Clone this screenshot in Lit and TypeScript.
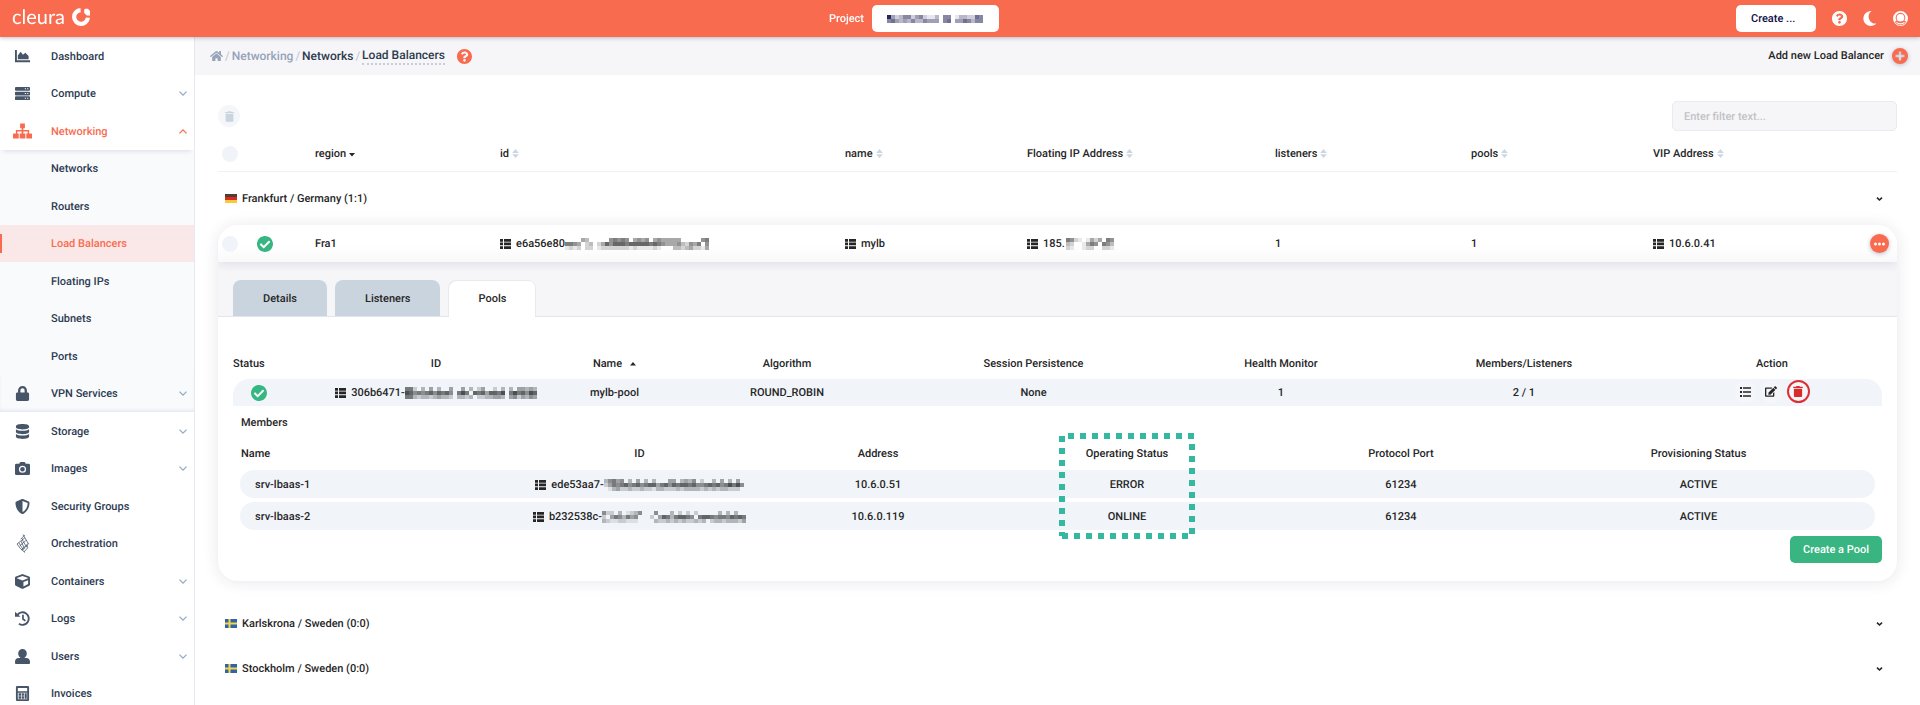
import { LitElement, html, css, svg, nothing } from "lit";
import { customElement } from "lit/decorators.js";

type Icon = { box: string; body: unknown };

const p = (box: string, d: string): Icon => ({ box, body: svg`<path fill="currentColor" fill-rule="evenodd" d=${d}/>` });

const ICONS: Record<string, Icon> = {
  chart: p("0 0 16 16", "M0 1h2v11h14v2H0zM3 11V7l3-4 2.500 3L11 4l3.500 3.500V11z"),
  server: p("0 0 16 16", "M1 1h14a1 1 0 0 1 1 1v2a1 1 0 0 1-1 1H1a1 1 0 0 1-1-1V2a1 1 0 0 1 1-1zM1 6h14a1 1 0 0 1 1 1v2a1 1 0 0 1-1 1H1a1 1 0 0 1-1-1V7a1 1 0 0 1 1-1zM1 11h14a1 1 0 0 1 1 1v2a1 1 0 0 1-1 1H1a1 1 0 0 1-1-1v-2a1 1 0 0 1 1-1zM10.500 2.500v1h1.200v-1zM13 2.500v1h1.200v-1zM10.500 7.500v1h1.200v-1zM13 7.500v1h1.200v-1zM10.500 12.500v1h1.200v-1zM13 12.500v1h1.200v-1z"),
  sitemap: p("0 0 20 16", "M7.500 0h5v5h-1.600v2H17v3.500h2.200a.8.8 0 0 1 .8.8V16h-6v-5.500h1.500v-2h-4.600v2H13V16H7v-5.500h2.100v-2H4.500v2H6V16H0v-4.700a.8.8 0 0 1 .8-.8H3V7h6.100V5H7.500z"),
  lock: p("0 0 448 512", "M400 224h-24v-72C376 68.200 307.800 0 224 0S72 68.200 72 152v72H48c-26.500 0-48 21.500-48 48v192c0 26.500 21.500 48 48 48h352c26.500 0 48-21.500 48-48V272c0-26.500-21.500-48-48-48zm-104 0H152v-72c0-39.700 32.300-72 72-72s72 32.300 72 72v72z"),
  database: p("0 0 14 16", "M0 2.300C0 1 3 0 7 0s7 1 7 2.300v1.200C14 4.800 11 5.800 7 5.800S0 4.800 0 3.500zM0 5.600c1.500 1.100 4 1.600 7 1.600s5.500-.5 7-1.600v3C14 9.900 11 10.900 7 10.900S0 9.900 0 8.600zM0 10.700c1.500 1.100 4 1.600 7 1.600s5.500-.5 7-1.600v3C14 15 11 16 7 16s-7-1-7-2.300z"),
  camera: p("0 0 16 16", "M1.500 3H4.500L5.200 1.500A1 1 0 0 1 6 1h4a1 1 0 0 1 .8.5L11.500 3h3A1.500 1.500 0 0 1 16 4.500v9a1.500 1.500 0 0 1-1.500 1.500h-13A1.500 1.500 0 0 1 0 13.500v-9A1.500 1.500 0 0 1 1.500 3zM8 5a3.800 3.800 0 1 0 0 7.600A3.800 3.800 0 0 0 8 5zM8 6.300a2.500 2.500 0 1 1 0 5A2.500 2.500 0 0 1 8 6.300z"),
  shield: p("0 0 512 512", "M466.500 83.700l-192-80a48.150 48.150 0 0 0-36.900 0l-192 80C27.700 91.100 16 108.600 16 128c0 198.500 114.500 335.700 221.500 380.300 11.800 4.900 25.100 4.900 36.900 0C360.100 472.600 496 349.300 496 128c0-19.400-11.700-36.900-29.500-44.300zM256.100 446.300l-.1-381 175.900 73.300c-3.300 151.400-82.100 261.100-175.800 307.700z"),
  cube: p("0 0 512 512", "M239.100 6.300l-208 78c-18.700 7-31.100 25-31.100 45v225.100c0 18.200 10.300 34.800 26.500 42.900l208 104c13.500 6.800 29.400 6.800 42.900 0l208-104c16.300-8.100 26.500-24.800 26.500-42.900V129.300c0-20-12.400-37.900-31.100-44.900l-208-78C262 2.200 250 2.200 239.100 6.300zM256 68.400l192 72v1.100l-192 78-192-78v-1.100l192-72zm32 356V275.500l160-65v133.900l-160 80z"),
  user: p("0 0 16 16", "M8 0a4.600 4.600 0 0 1 4.600 4.600C12.600 6.600 11.600 8.500 10 9.500h2c2.500 0 4 1.800 4 4V15a1 1 0 0 1-1 1H1a1 1 0 0 1-1-1v-1.500c0-2.200 1.500-4 4-4h2C4.400 8.500 3.400 6.600 3.400 4.600A4.600 4.600 0 0 1 8 0z"),
  calc: p("0 0 14 16", "M1.200 0h11.600A1.200 1.200 0 0 1 14 1.200v13.600a1.200 1.200 0 0 1-1.200 1.200H1.200A1.200 1.200 0 0 1 0 14.800V1.200A1.200 1.200 0 0 1 1.200 0zM2 2v3.500h10V2zM2 7.200V14h10V7.200zM2.800 7.800h2.700v2.500H2.800zM6.200 7.800h2.300v2.500H6.200zM2.800 11h2.700v2.500H2.800zM6.200 11h2.300v2.500H6.200zM9.300 7.800h2.200v5.700H9.300z"),
  history: { box: "0 0 16 16", body: svg`<path fill="none" stroke="currentColor" stroke-width="2" d="M2.500 4.200A6.700 6.700 0 1 1 4.200 13.600"/><path fill="currentColor" d="M0 .8l5.800 5.300H0z"/><path fill="none" stroke="currentColor" stroke-width="1.800" d="M8.500 4v4.500l2.600 2"/>` },
  heat: { box: "0 0 14 20", body: svg`<g fill="none" stroke="currentColor" stroke-width=".8"><path d="M7 .5l2 3.500L2 9.500l-1.300 1 3 4.200L9 19.500M9 4l3.800 6.500L6 17M6 4.500l1 3 4 6.500M2.500 9L7.500 17M5 7.500l3.500 8M9 1L4.500 5.500M10.500 6.500l-7 6M12.500 10l-7.500 7M8 19l4-4.500-1-3"/></g>` },
  home: p("0 0 576 512", "M280.370 148.260L96 300.110V464a16 16 0 0 0 16 16l112.060-.29a16 16 0 0 0 15.920-16V368a16 16 0 0 1 16-16h64a16 16 0 0 1 16 16v95.640a16 16 0 0 0 16 16.050L464 480a16 16 0 0 0 16-16V300L295.670 148.260a12.190 12.190 0 0 0-15.300 0zM571.600 251.470L488 182.560V44.050a12 12 0 0 0-12-12h-56a12 12 0 0 0-12 12v72.610L318.470 43a48 48 0 0 0-61 0L4.340 251.470a12 12 0 0 0-1.600 16.900l25.500 31A12 12 0 0 0 45.150 301l235.220-193.740a12.190 12.190 0 0 1 15.300 0L530.900 301a12 12 0 0 0 16.900-1.600l25.500-31a12 12 0 0 0-1.700-16.930z"),
  question: p("8 8 496 496", "M504 256c0 136.997-111.043 248-248 248S8 392.997 8 256C8 119.083 119.043 8 256 8s248 111.083 248 248zM262.655 90c-54.497 0-89.255 22.957-116.549 63.758-3.536 5.286-2.353 12.415 2.715 16.258l34.699 26.310c5.205 3.947 12.621 3.008 16.665-2.122 17.864-22.658 30.113-35.797 57.303-35.797 20.429 0 45.698 13.148 45.698 32.958 0 14.976-12.363 22.667-32.534 33.976C247.128 238.528 216 254.941 216 296v4c0 6.627 5.373 12 12 12h56c6.627 0 12-5.373 12-12v-1.333c0-28.462 83.186-29.647 83.186-106.667 0-58.002-60.165-102-116.531-102zM256 338c-25.365 0-46 20.635-46 46 0 25.364 20.635 46 46 46s46-20.636 46-46c0-25.365-20.635-46-46-46z"),
  check: p("8 8 496 496", "M504 256c0 136.967-111.033 248-248 248S8 392.967 8 256 119.033 8 256 8s248 111.033 248 248zM227.314 387.314l184-184c6.248-6.248 6.248-16.379 0-22.627l-22.627-22.627c-6.248-6.249-16.379-6.249-22.628 0L216 308.118l-70.059-70.059c-6.248-6.248-16.379-6.248-22.628 0l-22.627 22.627c-6.248 6.248-6.248 16.379 0 22.627l104 104c6.249 6.249 16.379 6.249 22.628.001z"),
  trash: p("0 0 448 512", "M32 464a48 48 0 0 0 48 48h288a48 48 0 0 0 48-48V128H32zM432 32H312l-9.400-18.700A24 24 0 0 0 281.100 0H166.800a23.720 23.720 0 0 0-21.400 13.300L136 32H16A16 16 0 0 0 0 48v32a16 16 0 0 0 16 16h416a16 16 0 0 0 16-16V48a16 16 0 0 0-16-16z"),
  edit: p("0 0 576 512", "M402.600 83.200l90.200 90.200c3.800 3.800 3.800 10 0 13.800L274.400 405.600l-92.800 10.300c-12.400 1.400-22.900-9.100-21.500-21.500l10.300-92.800L388.800 83.200c3.800-3.800 10-3.800 13.800 0zm162-22.900l-48.800-48.800c-15.200-15.200-39.900-15.200-55.200 0l-35.400 35.400c-3.800 3.800-3.800 10 0 13.800l90.200 90.200c3.800 3.800 10 3.800 13.800 0l35.400-35.400c15.200-15.300 15.200-40 0-55.200zM384 346.200V448H64V128h229.800c3.200 0 6.200-1.300 8.500-3.500l40-40c7.600-7.600 2.200-20.500-8.500-20.500H48C21.500 64 0 85.500 0 112v352c0 26.500 21.500 48 48 48h352c26.500 0 48-21.500 48-48V306.200c0-10.700-12.900-16-20.500-8.500l-40 40c-2.200 2.300-3.500 5.300-3.500 8.500z"),
  thlist: p("0 0 11 10", "M0 0h3v2.700H0zM4 0h7v2.700H4zM0 3.600h3v2.700H0zM4 3.600h7v2.700H4zM0 7.200h3v2.700H0zM4 7.200h7v2.700H4z"),
  list: p("0 0 11 10", "M0 0h2v2H0zM3 .3h8v1.400H3zM0 4h2v2H0zM3 4.300h8v1.400H3zM0 8h2v2H0zM3 8.300h8v1.400H3z"),
  moon: p("0 0 14 16", "M8.500 0A8 8 0 1 0 13.800 13.400 7.500 7.500 0 0 1 8.500 0z"),
  account: p("0 0 16 16", "M8 0a8 8 0 1 1 0 16A8 8 0 0 1 8 0zM8 2a5.200 5.200 0 0 0-4.200 8.300C3 10.400 2.400 11 2 11.700a7 7 0 0 0 12 0c-.4-.7-1-1.300-1.800-1.400A5.200 5.200 0 0 0 8 2zM8 3.100a4.100 4.100 0 1 1 0 8.200 4.100 4.100 0 0 1 0-8.200zM4.200 11.600a5.600 5.600 0 0 0 7.600 0l1 .4a6 6 0 0 1-9.600 0z"),
  plus: p("0 0 16 16", "M8 0a8 8 0 1 1 0 16A8 8 0 0 1 8 0zM6.800 3.500v3.300H3.500v2.400h3.300v3.300h2.400V9.200h3.300V6.800H9.200V3.500z"),
  dots: p("0 0 11 4", "M1.500.5a1.500 1.500 0 1 1 0 3 1.500 1.500 0 0 1 0-3zM5.500.5a1.500 1.500 0 1 1 0 3 1.500 1.500 0 0 1 0-3zM9.500.5a1.500 1.500 0 1 1 0 3 1.500 1.500 0 0 1 0-3z"),
  down: { box: "0 0 8 5", body: svg`<path fill="none" stroke="currentColor" stroke-width="1.300" d="M.5.600L4 4.100 7.500.600"/>` },
  up: { box: "0 0 8 5", body: svg`<path fill="none" stroke="currentColor" stroke-width="1.300" d="M.5 4.400L4 .9l3.500 3.500"/>` },
  fold: { box: "0 0 6 4", body: svg`<path fill="none" stroke="currentColor" stroke-width="1.600" d="M.5.600L3 3 5.500.600"/>` },
  sort: p("0 0 6 8", "M0 3.500L3 0l3 3.500zM0 4.600h6L3 8.100z"),
  sortdown: p("0 0 6 4", "M0 0h6L3 3.500z"),
  sortup: p("0 0 6 4", "M0 3.500h6L3 0z"),
  mark: { box: "0 0 18 18", body: svg`<path fill="none" stroke="currentColor" stroke-width="4.200" d="M8.600 2.100A6.900 6.900 0 1 0 15.900 9.600"/><path fill="currentColor" d="M12.200 2l.8-1.200h3L18 3v4.400h-3.200L12.200 5z"/>` },
};

const icon = (name: string) =>
  svg`<svg class="icon ${name}" viewBox=${ICONS[name].box} aria-hidden="true">${ICONS[name].body}</svg>`;

/* Rows of 4px cells; each digit is an ink strength from 0 (clear) to 9. */
const CENSORED: Record<string, string[]> = {
  project: ["942355245211305501332265", "564343533544405604465355"],
  lb: ["000043000005656504545045444440000056", "665402302475777677777676544453254605", "121202201222222212111121000332342214"],
  fip: ["652101424065", "320014650653", "210012200221"],
  pool: ["662030403004004030240020303044343", "875656757675068607674776806867587", "663233234332033230223344304524354"],
  m1: ["35645030403030004403435020030403040", "24656756756774675767767556767568685", "01342232232213322232333323232332220"],
  m2: ["522030123500050003020202000003030300", "204653645000204763677650677656657676", "321122111000032232323223230233233324"],
};

const mosaic = (key: string) => {
  const rows = CENSORED[key];
  const w = rows[0].length * 4;
  const h = rows.length * 4;
  return svg`<svg class="mosaic" width=${w} height=${h} viewBox="0 0 ${w} ${h}" shape-rendering="crispEdges" aria-hidden="true">${rows.map((r, y) =>
    [...r].map((c, x) => (c === "0" ? nothing : svg`<rect x=${x * 4} y=${y * 4} width="4" height="4" fill="currentColor" fill-opacity=${Number(c) / 10}/>`))
  )}</svg>`;
};

const flag = (country: string) =>
  country === "de"
    ? svg`<svg class="flag" viewBox="0 0 12 9" aria-hidden="true"><rect width="12" height="3" fill="#4a4038"/><rect y="3" width="12" height="3" fill="#e0281c"/><rect y="6" width="12" height="3" fill="#f8c93c"/></svg>`
    : svg`<svg class="flag" viewBox="0 0 12 9" aria-hidden="true"><rect width="12" height="9" fill="#2f64a8"/><path fill="#f5d54a" d="M3.500 0h2v9h-2zM0 3.500h12v2H0z"/></svg>`;

const shared = css`
  *, *::before, *::after { box-sizing: border-box; }
  a { color: inherit; text-decoration: none; }
  button { font: inherit; color: inherit; border: 0; padding: 0; background: none; cursor: pointer; text-rendering: inherit; }
  .icon { display: block; flex: none; overflow: visible; }
  .mosaic { display: block; flex: none; }
`;

const NAV: { label: string; icon?: string; fold?: string; cls?: string }[] = [
  { label: "Dashboard", icon: "chart" },
  { label: "Compute", icon: "server", fold: "down" },
  { label: "Networking", icon: "sitemap", fold: "up", cls: "open" },
  { label: "Networks", cls: "sub" },
  { label: "Routers", cls: "sub" },
  { label: "Load Balancers", cls: "sub current" },
  { label: "Floating IPs", cls: "sub" },
  { label: "Subnets", cls: "sub" },
  { label: "Ports", cls: "sub" },
  { label: "VPN Services", icon: "lock", fold: "down", cls: "sub last" },
  { label: "Storage", icon: "database", fold: "down" },
  { label: "Images", icon: "camera", fold: "down" },
  { label: "Security Groups", icon: "shield" },
  { label: "Orchestration", icon: "heat" },
  { label: "Containers", icon: "cube", fold: "down" },
  { label: "Logs", icon: "history", fold: "down" },
  { label: "Users", icon: "user", fold: "down" },
  { label: "Invoices", icon: "calc" },
];

@customElement("side-nav")
export class SideNav extends LitElement {
  static styles = [shared, css`
    :host { display: block; overflow-y: auto; scrollbar-width: none; background: #fff; border-right: 1px solid #e4e8f0; color: #2d3b52; }
    ul { list-style: none; margin: 0; padding: 0; }
    li { height: 38px; }
    li:nth-child(even) { height: 37px; }
    a { display: grid; grid-template-columns: 51px 1fr 22px; align-items: center; height: 100%; }
    .label { padding-top: 1px; }
    .slot { display: flex; justify-content: center; width: 45px; color: #475569; }
    .slot .icon { width: 15px; height: 15px; }
    .slot .sitemap { width: 19px; height: 16px; }
    .slot .heat { width: 14px; height: 19px; }
    .down, .up { width: 8px; height: 5px; margin-left: 7px; color: #94a9c4; }
    .open, .open .slot, .open .up, .current { color: #f96b4f; }
    .open { position: relative; box-shadow: 0 4px 5px -3px rgba(40, 50, 80, 0.14); }
    .sub { background: #f8fafc; }
    .current { background: #f9e8e7; }
    .current a { background: linear-gradient(#f96b4f, #f96b4f) left center / 2px 19px no-repeat; }
    .last { box-shadow: inset 0 -3px 4px -2px rgba(40, 50, 80, 0.12); }
  `];

  render() {
    return html`<nav aria-label="Main"><ul>${NAV.map((n) => html`
      <li class=${n.cls ?? ""}><a href="#">
        <span class="slot">${n.icon ? icon(n.icon) : nothing}</span>
        <span class="label">${n.label}</span>
        ${n.fold ? icon(n.fold) : nothing}
      </a></li>`)}</ul></nav>`;
  }
}

@customElement("pool-panel")
export class PoolPanel extends LitElement {
  static styles = [shared, css`
    :host { display: block; padding: 33px 15px 18px; text-align: center; }
    table, thead, tbody { display: block; }
    tr { display: grid; align-items: center; }
    th, td { padding: 0; font-weight: inherit; min-width: 0; }
    .pools tr { grid-template-columns: 93fr 220fr 137fr 208fr 285fr 210fr 276fr 220fr; }
    .pools th { height: 29px; line-height: 27px; }
    .pools td { line-height: 27px; }
    .pools tbody tr { height: 27px; background: #f1f5fa; border-radius: 16px 16px 0 0; }
    .pools th:first-child { text-align: left; }
    .status { padding-left: 18px; }
    .check { width: 16px; height: 16px; color: #36b680; }
    .cell { display: inline-flex; align-items: center; gap: 5px; vertical-align: top; }
    .ref { display: flex; align-items: center; justify-content: center; }
    .thlist { width: 11px; height: 10px; margin-right: 5px; }
    .sortup { width: 6px; height: 4px; margin-left: 3px; }
    .actions { display: flex; justify-content: center; align-items: center; gap: 5px; padding-bottom: 2px; }
    .actions button { display: grid; place-items: center; width: 21px; height: 22px; border-radius: 50%; background: #f5f6f9; }
    .actions .danger { width: 23px; height: 23px; border: 2px solid #dc2f35; color: #d92b2b; }
    .list { width: 11px; height: 10px; }
    .edit { width: 12px; height: 11px; }
    .trash { width: 10px; height: 11px; }
    .members { padding: 0 7px; }
    h3 { margin: 0; padding-left: 1px; font: inherit; line-height: 34px; text-align: left; }
    .members tr { grid-template-columns: 257fr 285fr 192fr 306fr 242fr 353fr; }
    .members th { height: 30px; line-height: 27px; }
    .members th:first-child { text-align: left; padding-left: 1px; }
    .members tbody { display: grid; gap: 4px; }
    .members tbody tr { height: 28px; padding-top: 1px; background: #f1f5fa; border-radius: 14px; }
    .members td:first-child { text-align: left; padding-left: 15px; }
    .grid { position: relative; }
    .marker { position: absolute; top: -7px; left: 50%; width: 136px; height: 106px; margin-left: 1px; pointer-events: none; }
    .foot { display: flex; justify-content: flex-end; padding-top: 6px; }
    .create { height: 27px; padding: 0 13px; border-radius: 5px; background: #38b581; color: #fff; }
  `];

  render() {
    const members = [
      ["srv-lbaas-1", "ede53aa7-", "m1", "10.6.0.51", "ERROR"],
      ["srv-lbaas-2", "b232538c-", "m2", "10.6.0.119", "ONLINE"],
    ];
    return html`
      <table class="pools">
        <thead><tr>
          <th>Status</th><th>ID</th>
          <th><span class="cell">Name ${icon("sortup")}</span></th>
          <th>Algorithm</th><th>Session Persistence</th><th>Health Monitor</th><th>Members/Listeners</th><th>Action</th>
        </tr></thead>
        <tbody><tr>
          <td class="status">${icon("check")}</td>
          <td class="ref">${icon("thlist")}306b6471-${mosaic("pool")}</td>
          <td>mylb-pool</td><td>ROUND_ROBIN</td><td>None</td><td>1</td><td>2 / 1</td>
          <td class="actions">
            <button aria-label="List members">${icon("list")}</button>
            <button aria-label="Edit pool">${icon("edit")}</button>
            <button class="danger" aria-label="Delete pool">${icon("trash")}</button>
          </td>
        </tr></tbody>
      </table>
      <section class="members">
        <h3>Members</h3>
        <div class="grid">
          <table>
            <thead><tr>
              <th>Name</th><th>ID</th><th>Address</th><th>Operating Status</th><th>Protocol Port</th><th>Provisioning Status</th>
            </tr></thead>
            <tbody>${members.map(([name, id, m, ip, op]) => html`
              <tr><td>${name}</td><td class="ref">${icon("thlist")}${id}${mosaic(m)}</td><td>${ip}</td><td>${op}</td><td>61234</td><td>ACTIVE</td></tr>`)}
            </tbody>
          </table>
          <svg class="marker" viewBox="0 0 136 106" aria-hidden="true">
            <g fill="none" stroke="#34b8a0" stroke-width="6" stroke-dasharray="6 6">
              <path d="M9 3H136"/><path d="M133 11V101"/><path d="M3 3V103"/><path d="M3 103H129"/>
            </g>
          </svg>
        </div>
      </section>
      <div class="foot"><button class="create">Create a Pool</button></div>`;
  }
}

@customElement("balancer-table")
export class BalancerTable extends LitElement {
  static styles = [shared, css`
    :host { display: block; }
    table, thead, tbody, tr { display: block; }
    th, td { display: flex; align-items: center; padding: 0; font-weight: inherit; text-align: left; min-width: 0; }
    .cols { display: grid; align-items: center; grid-template-columns: 39px 58px 185fr 345fr 182fr 248fr 196fr 182fr 209fr 35px; }
    thead tr { height: 36px; border-bottom: 1px solid #f0f1f4; }
    th button { display: flex; align-items: center; gap: 3px; }
    .sort { width: 7px; height: 9px; color: #ccd6e2; }
    .sortdown { width: 6px; height: 4px; margin-top: 3px; }
    input { appearance: none; width: 16px; height: 16px; margin: 0 0 0 4px; border-radius: 50%; background: #f0f4f9; }
    .group td { height: 45px; padding: 0 14px 0 7px; }
    .lead td { height: 53px; }
    .flag { width: 12px; height: 9px; margin-right: 5px; }
    .fold { width: 7px; height: 4px; margin-left: auto; }
    .card { border-radius: 20px; overflow: hidden; box-shadow: 0 1px 16px rgba(40, 40, 80, 0.11); margin-bottom: 20px; }
    .row { height: 37px; position: relative; background: linear-gradient(#fff 55%, #f9f9fb); box-shadow: 0 1px 10px rgba(40, 40, 80, 0.14); }
    .check { width: 16px; height: 16px; color: #36b680; }
    .thlist { width: 11px; height: 10px; margin-right: 5px; }
    .more { display: grid; place-items: center; width: 19px; height: 19px; margin-left: 8px; border-radius: 50%; background: #f96b4f; color: #fff; box-shadow: 0 1px 4px rgba(40, 40, 80, 0.3); }
    .dots { width: 11px; height: 4px; }
    .detail td { display: block; }
    .tabs { display: flex; gap: 8px; align-items: flex-end; height: 55px; padding: 0 15px; background: #f6f6f9; box-shadow: inset 0 -1px #e1e6ee; }
    .tabs button { height: 37px; padding: 0 30px; border-radius: 8px 8px 0 0; background: #cad4df; box-shadow: inset 0 -1px #e1e6ee; }
    .tabs .active { background: #fff; box-shadow: inset 1px 1px #e6eaf0, inset -1px 0 #e6eaf0; }
  `];

  render() {
    const heads = ["id", "name", "Floating IP Address", "listeners", "pools", "VIP Address"];
    const group = (country: string, label: string, cls = "") => html`
      <tr class="group ${cls}"><td>${flag(country)}${label}${icon("fold")}</td></tr>`;
    return html`
      <table>
        <thead><tr class="cols">
          <th><input type="checkbox" aria-label="Select all"></th><th></th>
          <th><button>region ${icon("sortdown")}</button></th>
          ${heads.map((h) => html`<th><button>${h} ${icon("sort")}</button></th>`)}
          <th></th>
        </tr></thead>
        <tbody>${group("de", "Frankfurt / Germany (1:1)", "lead")}</tbody>
        <tbody class="card">
          <tr class="cols row">
            <td><input type="checkbox" aria-label="Select Fra1 mylb"></td>
            <td>${icon("check")}</td>
            <td>Fra1</td>
            <td>${icon("thlist")}e6a56e80${mosaic("lb")}</td>
            <td>${icon("thlist")}mylb</td>
            <td>${icon("thlist")}185.&hairsp;${mosaic("fip")}</td>
            <td>1</td><td>1</td>
            <td>${icon("thlist")}10.6.0.41</td>
            <td><button class="more" aria-label="Actions">${icon("dots")}</button></td>
          </tr>
          <tr class="detail"><td>
            <div class="tabs" role="tablist">
              <button role="tab">Details</button><button role="tab">Listeners</button><button role="tab" class="active" aria-selected="true">Pools</button>
            </div>
            <pool-panel></pool-panel>
          </td></tr>
        </tbody>
        <tbody>${group("se", "Karlskrona / Sweden (0:0)")}${group("se", "Stockholm / Sweden (0:0)")}</tbody>
      </table>`;
  }
}

@customElement("app-root")
export class AppRoot extends LitElement {
  static styles = [shared, css`
    :host { display: grid; grid-template: 37px minmax(0, 1fr) / 195px minmax(0, 1fr); height: 100vh; overflow: hidden; background: #fff; color: #262626; font: 500 11px/16px Roboto, "Liberation Sans", sans-serif; text-rendering: geometricPrecision; }
    header { grid-column: 1 / -1; position: relative; display: grid; grid-template-columns: 1fr auto 1fr; align-items: center; padding: 0 12px; background: #f96b4f; color: #fff; box-shadow: 0 1px 4px rgba(40, 50, 80, 0.3); z-index: 2; }
    .logo { display: flex; align-items: center; gap: 7px; justify-self: start; padding-bottom: 3px; font: 400 20px/24px Lato, sans-serif; }
    .mark { width: 18px; height: 18px; }
    .project { display: flex; align-items: center; gap: 8px; margin-left: -92px; }
    .white { height: 27px; border-radius: 5px; background: #fff; color: #10104a; text-align: left; }
    .pick { width: 127px; padding-left: 15px; }
    .tools { display: flex; align-items: center; justify-self: end; gap: 16px; }
    .make { width: 80px; padding-left: 15px; }
    .question { width: 15px; height: 15px; }
    .moon { width: 14px; height: 15px; }
    .account { width: 15px; height: 15px; }
    main { overflow: hidden; }
    .bar { display: flex; justify-content: space-between; align-items: center; height: 38px; padding: 0 12px 0 15px; background: #f6f6f9; }
    ol { display: flex; align-items: center; gap: 2px; list-style: none; margin: 0; padding: 0; font-size: 12px; color: #97a3b8; }
    li { display: flex; align-items: center; gap: 2px; }
    li + li::before { content: "/"; color: #c3cad6; }
    .trail { display: flex; align-items: center; gap: 12px; }
    .home { width: 13px; height: 12px; }
    .crumb { color: #2d3b4e; }
    .here { color: #2d3b4e; border-bottom: 2px dotted #c5cedb; }
    .help { color: #f96b4f; }
    .add { display: flex; align-items: center; gap: 8px; }
    .plus { width: 16px; height: 16px; color: #f96b4f; filter: drop-shadow(0 1px 2px rgba(40, 40, 80, 0.3)); }
    .content { padding: 26px 23px 0; }
    .filter { display: flex; justify-content: space-between; align-items: center; margin-bottom: 5px; }
    .bin { display: grid; place-items: center; width: 22px; height: 22px; border-radius: 50%; background: #f5f6f9; color: #cad4df; }
    .trash { width: 9px; height: 11px; }
    .search { width: 225px; height: 30px; padding: 0 11px; border: 1px solid #e8ebf1; border-radius: 5px; background: #f6f6f9; font: inherit; text-rendering: inherit; }
    .search::placeholder { color: #c2c2c6; }
  `];

  render() {
    return html`
      <header>
        <a class="logo" href="#">cleura ${icon("mark")}</a>
        <div class="project"><span>Project</span><button class="white pick" aria-label="Choose project">${mosaic("project")}</button></div>
        <div class="tools">
          <button class="white make">Create ...</button>
          <button aria-label="Help">${icon("question")}</button>
          <button aria-label="Dark mode">${icon("moon")}</button>
          <button aria-label="Account">${icon("account")}</button>
        </div>
      </header>
      <side-nav></side-nav>
      <main>
        <div class="bar">
          <div class="trail">
            <ol>
              <li><a href="#" aria-label="Home">${icon("home")}</a></li>
              <li>Networking</li>
              <li><a class="crumb" href="#">Networks</a></li>
              <li><a class="here" href="#">Load Balancers</a></li>
            </ol>
            <button class="help" aria-label="Help on this page">${icon("question")}</button>
          </div>
          <button class="add">Add new Load Balancer ${icon("plus")}</button>
        </div>
        <div class="content">
          <div class="filter">
            <button class="bin" aria-label="Delete selected">${icon("trash")}</button>
            <input class="search" type="text" placeholder="Enter filter text..." aria-label="Filter">
          </div>
          <balancer-table></balancer-table>
        </div>
      </main>`;
  }
}
